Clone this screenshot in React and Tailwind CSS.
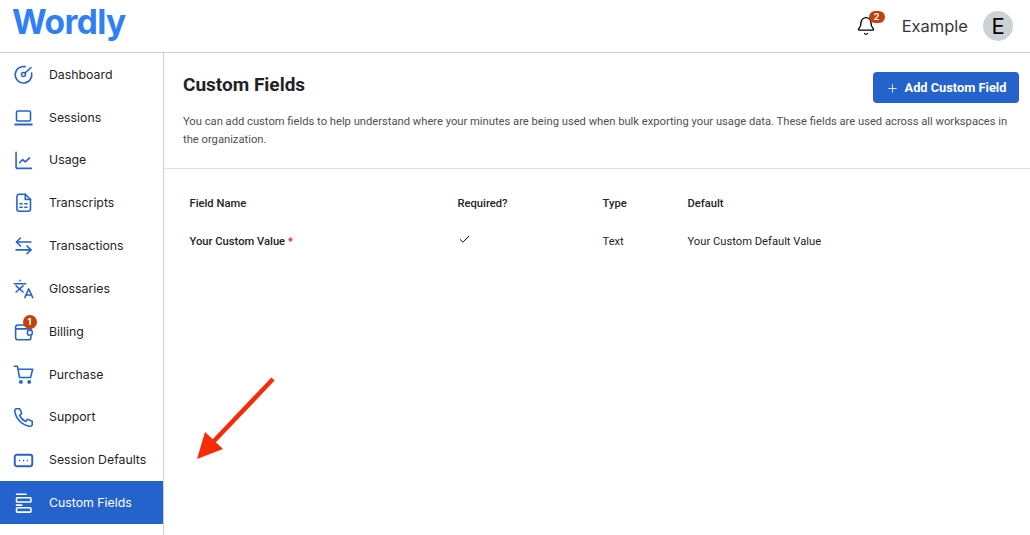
import { Bell, Check, Plus } from "lucide-react";

const Icon = ({ children }) => (
    <svg viewBox="0 0 24 24" fill="none" stroke="currentColor" strokeWidth="1.8" strokeLinecap="round" strokeLinejoin="round" className="w-[21px] h-[21px]">
        {children}
    </svg>
);

const navItems = [
    {
        label: "Dashboard",
        icon: <><path d="M14 3a9.500 9.500 0 1 0 7.300 7.300" /><path d="M20.500 4l-6.800 6.300" /><circle cx="12" cy="12" r="2.300" /></>,
    },
    {
        label: "Sessions",
        icon: <><rect x="4" y="4.500" width="16" height="11.500" rx="1.500" /><path d="M2.500 20h19" strokeWidth="2.200" /></>,
    },
    {
        label: "Usage",
        icon: <><path d="M3.500 2.500V19a2 2 0 0 0 2 2h15.500" /><path d="M7.500 14.500l3.500-3.500 3 2.500 5-4.500" /></>,
    },
    {
        label: "Transcripts",
        icon: <><path d="M7 2.500h7l6 6v11a2.500 2.500 0 0 1-2.500 2.500h-10.500a2.500 2.500 0 0 1-2.500-2.500v-14.500a2.500 2.500 0 0 1 2.500-2.500z" /><path d="M14 2.500v6h6" /><path d="M8 13.500h2.500M13.500 13.500h2.500M8 17.500h2.500M13.500 17.500h2.500" /></>,
    },
    {
        label: "Transactions",
        icon: <><path d="M20.500 8H4" /><path d="M8.500 3.500L4 8l4.500 4.500" /><path d="M3.500 17h17" /><path d="M16 12.500l4.500 4.500-4.500 4.500" /></>,
    },
    {
        label: "Glossaries",
        icon: <><path d="M1.500 6.500h13" /><path d="M8 2.500v.6" /><path d="M3.500 9l8 7M11.500 9l-8 7" /><path d="M13.500 22.500l4.500-10 4.500 10" /><path d="M15 19.500h6" /></>,
    },
    {
        label: "Billing",
        badge: "1",
        icon: <><path d="M20.500 10V7a2.500 2.500 0 0 0-2.500-2.500H5.500A2.500 2.500 0 0 0 3 7v12a2.500 2.500 0 0 0 2.500 2.500H18a2.500 2.500 0 0 0 2.500-2.500v-2" /><path d="M3 9h17" /><rect x="16.500" y="10.500" width="5.500" height="5.500" rx="2" /></>,
    },
    {
        label: "Purchase",
        icon: <><path d="M1.500 2.500h3.500l2.500 13h12.500L22.500 6H6" /><circle cx="9" cy="20.500" r="1.300" fill="currentColor" /><circle cx="18.500" cy="20.500" r="1.300" fill="currentColor" /></>,
    },
    {
        label: "Support",
        icon: <path d="M4.500 2h3.300l2.200 5.500-2.500 2a14 14 0 0 0 7 7l2-2.500 5.500 2.200v3.500a2.300 2.300 0 0 1-2.500 2.300C10.500 21 3 13.500 2 4.500A2.300 2.300 0 0 1 4.500 2z" />,
    },
    {
        label: "Session Defaults",
        icon: <><rect x="2" y="5.500" width="20" height="13" rx="2.500" strokeWidth="2.200" /><path d="M7.500 12h.01M12 12h.01M16.500 12h.01" /></>,
    },
    {
        label: "Custom Fields",
        active: true,
        icon: <><path d="M4 2.500h11" /><rect x="4" y="6.500" width="16.500" height="5" rx="1" /><path d="M4 15h6" /><rect x="4" y="18" width="16.500" height="5" rx="1" /></>,
    },
];

const NavItem = ({ item }) => (
    <div className={`flex items-center h-[42.85px] pl-[12.500px] ${item.active ? "bg-[#2563cc] text-white" : "text-[#1f2328]"}`}>
        <div className={`relative w-[21px] h-[21px] ${item.active ? "text-white" : "text-[#2563cc]"}`}>
            <Icon>{item.icon}</Icon>
            {item.badge && (
                <span className="absolute -top-[6px] left-[10px] w-[14px] h-[14px] rounded-full bg-[#c2410c] text-white text-[9px] font-bold flex items-center justify-center">{item.badge}</span>
            )}
        </div>
        <span className="ml-[15.500px] text-[12.300px] pt-[1px]">{item.label}</span>
    </div>
);

export default function App() {
    return (
        <div className="h-[535px] w-[1030px] overflow-hidden bg-white flex flex-col font-['Inter',sans-serif]">
            <header className="h-[53px] shrink-0 border-b border-[#ccd1d6] flex items-center justify-between pl-[12px] pr-[17px]">
                <span className="text-[33.500px] leading-none font-bold tracking-[-0.6px] text-[#2f80f5] -mt-[6px]">Wordly</span>
                <div className="flex items-center">
                    <div className="relative">
                        <Bell className="w-[20px] h-[20px] text-black" strokeWidth={1.6} />
                        <span className="absolute -top-[5px] left-[13px] w-[16px] h-[12px] rounded-full bg-[#c2410c] text-white text-[9px] font-bold flex items-center justify-center">2</span>
                    </div>
                    <span className="ml-[26px] text-[16.500px] text-[#33373b]">Example</span>
                    <div className="ml-[15px] w-[30px] h-[30px] rounded-full bg-[#ccd1d6] text-black text-[22px] flex items-center justify-center">E</div>
                </div>
            </header>
            <div className="flex flex-1 min-h-0">
                <aside className="w-[164px] shrink-0 border-r border-[#ccd1d6]">
                    {navItems.map((item) => <NavItem key={item.label} item={item} />)}
                </aside>
                <main className="flex-1 font-['Roboto',sans-serif]">
                    <div className="h-[116px] border-b border-[#dcdfe3] pl-[19px] pr-[11px] pt-[19px]">
                        <div className="flex justify-between items-start">
                            <h1 className="text-[19px] leading-[24px] font-bold text-[#1f2328] mt-[1px]">Custom Fields</h1>
                            <button className="h-[31px] w-[146px] rounded-[4px] bg-[#2563cc] text-white text-[12.800px] font-bold flex items-center justify-center gap-[6px] pt-[1px]">
                                <Plus className="w-[13px] h-[13px]" strokeWidth={1.5} />
                                Add Custom Field
                            </button>
                        </div>
                        <p className="mt-[10px] text-[11.200px] leading-[18px] text-[#4b5157]">You can add custom fields to help understand where your minutes are being used when bulk exporting your usage data. These fields are used across all workspaces in the organization.</p>
                    </div>
                    <div className="pl-[25.500px] pt-[27px] text-[11.200px] text-[#1f2328]">
                        <div className="flex h-[17px] items-center font-medium">
                            <span className="w-[268px]">Field Name</span>
                            <span className="w-[145px]">Required?</span>
                            <span className="w-[85px]">Type</span>
                            <span>Default</span>
                        </div>
                        <div className="flex h-[17px] items-center mt-[21px]">
                            <span className="w-[268px] font-medium">Your Custom Value <span className="text-[#d0191f]">*</span></span>
                            <span className="w-[145px]"><Check className="w-[13px] h-[13px] -mt-[6px] text-black" strokeWidth={1.800} /></span>
                            <span className="w-[85px]">Text</span>
                            <span>Your Custom Default Value</span>
                        </div>
                    </div>
                </main>
            </div>
            <svg viewBox="0 0 1030 535" className="absolute top-0 left-0 w-[1030px] h-[535px] pointer-events-none">
                <path d="M273 379L214 441" stroke="#f52c07" strokeWidth="4.500" />
                <path d="M197 459l8-27 18 17z" fill="#f52c07" />
            </svg>
        </div>
    );
}
